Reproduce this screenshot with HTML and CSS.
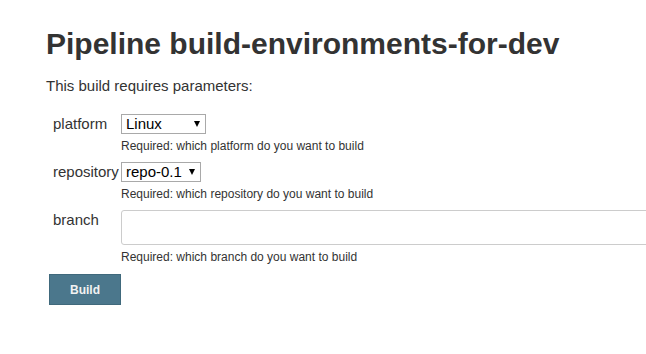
FILE: index.html
```html
<!DOCTYPE html>
<html>
<head>
<meta charset="utf-8">
<link rel="stylesheet" href="styles.css">
</head>
<body>
<div class="page">
  <h1 class="title">Pipeline build-environments-for-dev</h1>
  <p class="intro">This build requires parameters:</p>
  <form class="params">
    <div class="row">
      <label class="label">platform</label>
      <div class="field">
        <span class="select-wrap w-linux"><select class="select"><option>Linux</option></select></span>
      </div>
    </div>
    <div class="help">Required: which platform do you want to build</div>
    <div class="row">
      <label class="label">repository</label>
      <div class="field">
        <span class="select-wrap w-repo"><select class="select"><option>repo-0.1</option></select></span>
      </div>
    </div>
    <div class="help">Required: which repository do you want to build</div>
    <div class="row row-text">
      <label class="label">branch</label>
      <div class="field field-grow">
        <input class="text" type="text">
      </div>
    </div>
    <div class="help">Required: which branch do you want to build</div>
    <div class="actions">
      <button type="button" class="build">Build</button>
    </div>
  </form>
</div>
</body>
</html>
```
FILE: styles.css
```css
html, body {
  margin: 0;
  padding: 0;
  background: #fff;
  overflow: hidden;
}
body {
  font-family: "Liberation Sans", Arial, sans-serif;
  color: #333;
}
.page {
  padding: 0 0 0 46px;
}
.title {
  margin: 0;
  padding-top: 27px;
  font-size: 30px;
  line-height: 34px;
  font-weight: bold;
  color: #333;
}
.intro {
  margin: 16px 0 0 0;
  font-size: 15px;
  line-height: 18px;
}
.params {
  margin-top: 19px;
  padding-left: 7px;
}
.row {
  display: flex;
  align-items: center;
}
.row-text {
  align-items: flex-start;
}
.label {
  width: 68px;
  font-size: 15px;
  line-height: 20px;
  flex: none;
}
.field {
  flex: none;
}
.field-grow {
  flex: 1;
}
.select-wrap {
  position: relative;
  display: inline-block;
  height: 20px;
}
.select-wrap::after {
  content: "";
  position: absolute;
  top: 7px;
  right: 6px;
  width: 0;
  height: 0;
  border-left: 3.5px solid transparent;
  border-right: 3.5px solid transparent;
  border-top: 6px solid #000;
  pointer-events: none;
}
.w-linux { width: 85px; }
.w-repo { width: 80px; }
.select {
  -webkit-appearance: none;
  appearance: none;
  box-sizing: border-box;
  width: 100%;
  height: 20px;
  margin: 0;
  padding: 0 0 0 4px;
  border: 1px solid #a9a9a9;
  border-radius: 0;
  background: #fff;
  font-family: "Liberation Sans", Arial, sans-serif;
  font-size: 15px;
  line-height: 18px;
  color: #000;
}
.text {
  box-sizing: border-box;
  display: block;
  width: calc(100% + 10px);
  height: 35px;
  margin: 0;
  border: 1px solid #ccc;
  border-radius: 3px;
  background: #fff;
  padding: 0 6px;
  font-size: 15px;
}
.help {
  margin-left: 68px;
  padding-top: 5px;
  font-size: 12px;
  line-height: 14px;
  height: 23px;
  color: #333;
}
.actions {
  margin-top: 1px;
  margin-left: -4px;
}
.build {
  width: 72px;
  height: 31px;
  background: #4b778c;
  border: 1px solid #40697c;
  border-radius: 0;
  color: #f2f2f2;
  font-family: "Liberation Sans", Arial, sans-serif;
  font-weight: bold;
  font-size: 12px;
  padding: 0;
}
```
